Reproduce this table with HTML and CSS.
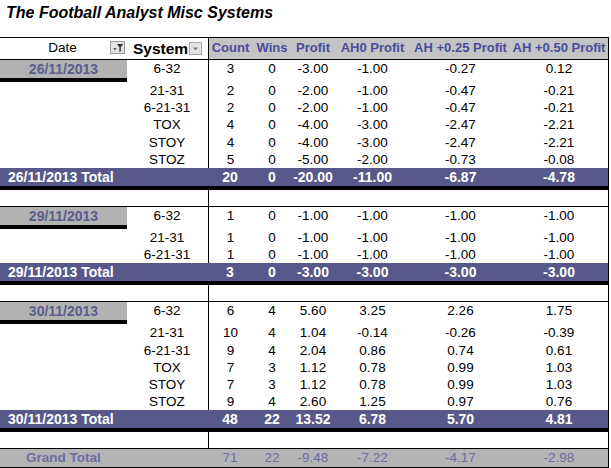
FILE: index.html
```html
<!DOCTYPE html>
<html>
<head>
<meta charset="utf-8">
<link rel="stylesheet" href="styles.css">
</head>
<body>
<div class="sheet">
  <h1 class="title">The Football Analyst Misc Systems</h1>
  <div class="grid">
    <div class="row head">
      <div class="c hd-date">Date
        <span class="btn btn-filter"><svg width="15" height="13" viewBox="0 0 15 13"><rect x="0.5" y="0.5" width="14" height="12" fill="#e2e2e2" stroke="#9a9a9a"/><path d="M3.2 7.2H6.6L4.9 9.2Z" fill="#333"/><path d="M7 3H13.2L10.8 6.3V10.2L9.4 10.8V6.3Z" fill="#333"/></svg></span>
      </div>
      <div class="c hd-sys">System
        <span class="btn"><svg width="13" height="13" viewBox="0 0 13 13"><rect x="0.5" y="0.5" width="12" height="12" fill="#e2e2e2" stroke="#a8a8a8"/><path d="M4 5.5H9L6.5 8.3Z" fill="#7a7a7a"/></svg></span>
      </div>
      <div class="c hd v">Count</div>
      <div class="c hd">Wins</div>
      <div class="c hd">Profit</div>
      <div class="c hd">AH0 Profit</div>
      <div class="c hd">AH +0.25 Profit</div>
      <div class="c hd">AH +0.50 Profit</div>
    </div>

    <div class="row first">
      <div class="c date">26/11/2013</div><div class="c sys">6-32</div><div class="c v">3</div><div class="c">0</div><div class="c">-3.00</div><div class="c">-1.00</div><div class="c">-0.27</div><div class="c">0.12</div>
    </div>
    <div class="row data">
      <div class="c"></div><div class="c sys">21-31</div><div class="c v">2</div><div class="c">0</div><div class="c">-2.00</div><div class="c">-1.00</div><div class="c">-0.47</div><div class="c">-0.21</div>
    </div>
    <div class="row data">
      <div class="c"></div><div class="c sys">6-21-31</div><div class="c v">2</div><div class="c">0</div><div class="c">-2.00</div><div class="c">-1.00</div><div class="c">-0.47</div><div class="c">-0.21</div>
    </div>
    <div class="row data">
      <div class="c"></div><div class="c sys">TOX</div><div class="c v">4</div><div class="c">0</div><div class="c">-4.00</div><div class="c">-3.00</div><div class="c">-2.47</div><div class="c">-2.21</div>
    </div>
    <div class="row data">
      <div class="c"></div><div class="c sys">STOY</div><div class="c v">4</div><div class="c">0</div><div class="c">-4.00</div><div class="c">-3.00</div><div class="c">-2.47</div><div class="c">-2.21</div>
    </div>
    <div class="row data">
      <div class="c"></div><div class="c sys">STOZ</div><div class="c v">5</div><div class="c">0</div><div class="c">-5.00</div><div class="c">-2.00</div><div class="c">-0.73</div><div class="c">-0.08</div>
    </div>
    <div class="row total">
      <div class="c tl">26/11/2013 Total</div><div class="c">20</div><div class="c">0</div><div class="c">-20.00</div><div class="c">-11.00</div><div class="c">-6.87</div><div class="c">-4.78</div>
    </div>
    <div class="row empty">
      <div class="c"></div><div class="c"></div><div class="c v"></div>
    </div>

    <div class="row first">
      <div class="c date">29/11/2013</div><div class="c sys">6-32</div><div class="c v">1</div><div class="c">0</div><div class="c">-1.00</div><div class="c">-1.00</div><div class="c">-1.00</div><div class="c">-1.00</div>
    </div>
    <div class="row data">
      <div class="c"></div><div class="c sys">21-31</div><div class="c v">1</div><div class="c">0</div><div class="c">-1.00</div><div class="c">-1.00</div><div class="c">-1.00</div><div class="c">-1.00</div>
    </div>
    <div class="row data">
      <div class="c"></div><div class="c sys">6-21-31</div><div class="c v">1</div><div class="c">0</div><div class="c">-1.00</div><div class="c">-1.00</div><div class="c">-1.00</div><div class="c">-1.00</div>
    </div>
    <div class="row total">
      <div class="c tl">29/11/2013 Total</div><div class="c">3</div><div class="c">0</div><div class="c">-3.00</div><div class="c">-3.00</div><div class="c">-3.00</div><div class="c">-3.00</div>
    </div>
    <div class="row empty">
      <div class="c"></div><div class="c"></div><div class="c v"></div>
    </div>

    <div class="row first">
      <div class="c date">30/11/2013</div><div class="c sys">6-32</div><div class="c v">6</div><div class="c">4</div><div class="c">5.60</div><div class="c">3.25</div><div class="c">2.26</div><div class="c">1.75</div>
    </div>
    <div class="row data">
      <div class="c"></div><div class="c sys">21-31</div><div class="c v">10</div><div class="c">4</div><div class="c">1.04</div><div class="c">-0.14</div><div class="c">-0.26</div><div class="c">-0.39</div>
    </div>
    <div class="row data">
      <div class="c"></div><div class="c sys">6-21-31</div><div class="c v">9</div><div class="c">4</div><div class="c">2.04</div><div class="c">0.86</div><div class="c">0.74</div><div class="c">0.61</div>
    </div>
    <div class="row data">
      <div class="c"></div><div class="c sys">TOX</div><div class="c v">7</div><div class="c">3</div><div class="c">1.12</div><div class="c">0.78</div><div class="c">0.99</div><div class="c">1.03</div>
    </div>
    <div class="row data">
      <div class="c"></div><div class="c sys">STOY</div><div class="c v">7</div><div class="c">3</div><div class="c">1.12</div><div class="c">0.78</div><div class="c">0.99</div><div class="c">1.03</div>
    </div>
    <div class="row data">
      <div class="c"></div><div class="c sys">STOZ</div><div class="c v">9</div><div class="c">4</div><div class="c">2.60</div><div class="c">1.25</div><div class="c">0.97</div><div class="c">0.76</div>
    </div>
    <div class="row total">
      <div class="c tl">30/11/2013 Total</div><div class="c">48</div><div class="c">22</div><div class="c">13.52</div><div class="c">6.78</div><div class="c">5.70</div><div class="c">4.81</div>
    </div>
    <div class="row empty">
      <div class="c"></div><div class="c"></div><div class="c v"></div>
    </div>

    <div class="row grand">
      <div class="c gl">Grand Total</div><div class="c"></div><div class="c">71</div><div class="c">22</div><div class="c">-9.48</div><div class="c">-7.22</div><div class="c">-4.17</div><div class="c">-2.98</div>
    </div>
  </div>
</div>
</body>
</html>
```

FILE: styles.css
```css
body {
  margin: 0;
  background: #ffffff;
}

.sheet {
  font-family: "Liberation Sans", Arial, sans-serif;
  color: #000;
}

.title {
  margin: 0 0 15px 0;
  padding: 4px 0 0 6px;
  height: 18px;
  line-height: 18px;
  font-size: 16px;
  font-weight: bold;
  font-style: italic;
}

.grid {
  width: 608px;
  border-top: 1px solid #000;
  border-right: 1px solid #000;
}

.row {
  display: grid;
  grid-template-columns: 127px 81px 44px 40px 42px 77px 99px 98px;
  font-size: 13.5px;
}

.c {
  text-align: center;
  white-space: nowrap;
  box-sizing: border-box;
}

.v {
  border-left: 1px solid #000;
}

/* header */
.head {
  height: 21px;
  line-height: 20px;
  border-bottom: 1px solid #000;
  box-sizing: border-box;
  height: 22px;
}

.hd-date {
  position: relative;
  font-size: 13.5px;
  padding-right: 2px;
}

.btn {
  display: inline-block;
  vertical-align: middle;
  line-height: 0;
}

.btn-filter {
  position: absolute;
  right: 2px;
  top: 3px;
}

.hd-sys {
  display: flex;
  align-items: center;
  gap: 1px;
  padding-left: 6px;
  font-size: 15.5px;
  font-weight: bold;
}

.hd {
  background: #c4c4c4;
  color: #4a4a9c;
  font-weight: bold;
  font-size: 13px;
}

/* data rows */
.first {
  height: 22px;
  line-height: 18px;
}

.date {
  height: 22px;
  background: #b2b2b2;
  border-bottom: 4px solid #000;
  color: #5c5c8e;
  font-weight: bold;
  font-size: 14px;
}

.data {
  height: 17.2px;
  line-height: 17.2px;
}

.sys {
  padding-right: 1px;
}

/* totals */
.total {
  height: 22px;
  box-sizing: border-box;
  line-height: 18px;
  background: #58588a;
  border-bottom: 4px solid #000;
  color: #ffffff;
  font-weight: bold;
  font-size: 14px;
}

.tl {
  grid-column: span 2;
  text-align: left;
  padding-left: 8px;
}

.empty {
  height: 17px;
  box-sizing: border-box;
  border-bottom: 1px solid #000;
}

.grand {
  height: 19px;
  box-sizing: border-box;
  line-height: 18px;
  background: #b4b4b4;
  border-bottom: 1px solid #000;
  color: #6c6ca0;
}

.gl {
  font-weight: bold;
}
```
